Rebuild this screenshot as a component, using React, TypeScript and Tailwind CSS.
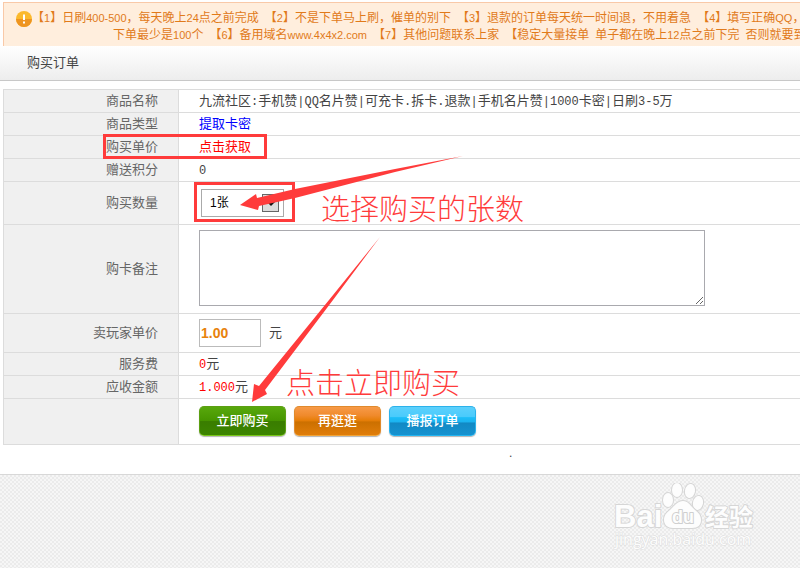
import type { ReactNode } from "react";
import clsx from "clsx";

interface FieldRowProps {
  label?: string;
  htmlFor?: string;
  height: string;
  children: ReactNode;
}

function FieldRow({ label, htmlFor, height, children }: FieldRowProps) {
  return (
    <tr className={height}>
      <th
        scope="row"
        className="w-[175px] border-r border-b border-[#dcdcdc] bg-[#f0f0f0] p-0 pr-5 text-right font-normal text-[#666]"
      >
        {htmlFor ? <label htmlFor={htmlFor}>{label}</label> : label}
      </th>
      <td className="border-b border-[#dcdcdc] p-0 pl-5 whitespace-nowrap">
        {children}
      </td>
    </tr>
  );
}

// Latin text and digits, set narrower than the Chinese around them
function Num({ children }: { children: ReactNode }) {
  return <span className="font-['Liberation_Mono',monospace] text-xs">{children}</span>;
}

function En({ children }: { children: ReactNode }) {
  return <span className="text-[11px]">{children}</span>;
}

function WarnIcon() {
  return (
    <svg viewBox="0 0 16 16" className="mt-px h-4 w-4 shrink-0" aria-hidden="true">
      <circle cx="8" cy="8" r="8" fill="#fbb92d" />
      <path d="M0 8a8 8 0 0 0 16 0z" fill="#ee9420" />
      <path d="M7 3.5h2v5.5H7zM7 10.5h2v2H7z" fill="#fff" />
    </svg>
  );
}

function Notice() {
  return (
    <div className="mt-[2px] ml-[3px] flex overflow-hidden border-t border-l border-[#f9c9a8] bg-[#ffeedd] pt-[7px] pb-[2px] pl-3 text-xs leading-[17px] whitespace-nowrap text-[#e17a1a]">
      <WarnIcon />
      <div>
        <p className="flex gap-[6px]">
          <span>【<En>1</En>】日刷<En>400-500</En>，每天晚上<En>24</En>点之前完成</span>
          <span>【<En>2</En>】不是下单马上刷，催单的别下</span>
          <span>【<En>3</En>】退款的订单每天统一时间退，不用着急</span>
          <span>【<En>4</En>】填写正确<En>QQ</En>，</span>
        </p>
        <p className="flex gap-[6px] pl-[81px]">
          <span>下单最少是<En>100</En>个</span>
          <span>【<En>6</En>】备用域名<En>www.4x4x2.com</En></span>
          <span>【<En>7</En>】其他问题联系上家</span>
          <span>【稳定大量接单</span>
          <span>单子都在晚上<En>12</En>点之前下完</span>
          <span>否则就要到</span>
        </p>
      </div>
    </div>
  );
}

const ACTIONS = [
  {
    text: "立即购买",
    style:
      "border-[#5c9f12] border-b-[#7ac81a] bg-[linear-gradient(#58a80c_0%,#479600_48%,#397d00_52%,#3d8500_100%)]",
  },
  {
    text: "再逛逛",
    style:
      "border-[#e08a2c] border-b-[#f2a436] bg-[linear-gradient(#f79a48_0%,#f08a2c_30%,#e67e08_48%,#cc7000_54%,#e07d0a_100%)]",
  },
  {
    text: "播报订单",
    style:
      "border-[#2cb2ea] border-b-[#22b4f0] bg-[linear-gradient(#5cd0fc_0%,#4acbfc_34%,#1cbdf8_38%,#1cb4f0_52%,#1289c4_58%,#1592d0_100%)]",
  },
];

function PawLogo() {
  return (
    <svg
      viewBox="0 0 146 70"
      className="h-[70px] w-[146px]"
      stroke="#d6d6d6"
      fill="#fdfdfd"
      strokeWidth="2"
      strokeLinejoin="round"
      role="img"
      aria-label="Baidu 经验"
    >
      <g style={{ paintOrder: "stroke" }} className="font-['Liberation_Sans','Noto_Sans_CJK_SC',sans-serif]">
        <text x="3" y="44" fontSize="31" fontWeight="700">Bai</text>
        <ellipse cx="57" cy="17" rx="5" ry="7" />
        <ellipse cx="66" cy="7" rx="5" ry="7" />
        <ellipse cx="79" cy="8" rx="5" ry="7" transform="rotate(10 79 8)" />
        <ellipse cx="87" cy="20" rx="5" ry="7" transform="rotate(10 87 20)" />
        <path d="M72 18c-5 0-8 4-11 7-4 4-8 6-8 12 0 5 4 8 9 8h19c6 0 9-3 9-8 0-6-4-8-8-12-3-3-5-7-10-7z" />
        <text x="61" y="40" fontSize="18" fontWeight="700" stroke="#cfcfcf">du</text>
        <text x="94" y="43" fontSize="24" fontWeight="700">经验</text>
        <text x="4" y="62" fontSize="16" strokeWidth="1" stroke="#dcdcdc" className="font-['Open_Sans',sans-serif]">
          jingyan.baidu.com
        </text>
      </g>
    </svg>
  );
}

// Red tutorial marks laid over the form
function Marks() {
  return (
    <div className="pointer-events-none absolute inset-0 overflow-hidden font-light text-[#ff3b3b]">
      <div className="absolute top-[134px] left-[103px] h-[25px] w-[164px] border-3 border-current" />
      <div className="absolute top-[182px] left-[194px] h-[40px] w-[101px] border-3 border-current" />
      <svg width="800" height="480" className="absolute top-0 left-0" fill="currentColor" aria-hidden="true">
        <path d="M240 205 256 194 257 198 295 189 395 169 463 156 395 172 295 198 259 206 258 210z" />
        <path d="M252 402 254 384 259 386 329 300 380 237 333 300 265 390 267 394z" />
      </svg>
      <p className="absolute top-[190px] left-[321px] text-[29px] leading-10 whitespace-nowrap">选择购买的张数</p>
      <p className="absolute top-[364px] left-[286px] text-[29px] leading-10 whitespace-nowrap">点击立即购买</p>
    </div>
  );
}

export default function App() {
  return (
    <div className="relative flex min-h-screen flex-col overflow-hidden bg-white font-['Liberation_Sans','Noto_Sans_CJK_SC',sans-serif] text-[13px] leading-5 text-[#444]">
      <Notice />
      <h1 className="border-b border-[#c8c8c8] bg-linear-to-b from-white to-[#ededed] py-[7px] pl-[27px] leading-5">
        购买订单
      </h1>

      <form className="mt-[8px] pl-[3px]" onSubmit={(e) => e.preventDefault()}>
        <table className="w-full border-separate border-spacing-0 border-t border-l border-[#dcdcdc]">
          <tbody>
            <FieldRow label="商品名称" height="h-[23px]">
              九流社区<Num>:</Num>手机赞<Num>|QQ</Num>名片赞<Num>|</Num>可充卡<Num>.</Num>拆卡<Num>.</Num>退款<Num>|</Num>
              手机名片赞<Num>|1000</Num>卡密<Num>|</Num>日刷<Num>3-5</Num>万
            </FieldRow>
            <FieldRow label="商品类型" height="h-[23px]">
              <span className="text-[#0000ff]">提取卡密</span>
            </FieldRow>
            <FieldRow label="购买单价" height="h-[23px]">
              <a href="#price" className="text-[#ff0000]">点击获取</a>
            </FieldRow>
            <FieldRow label="赠送积分" height="h-[23px]">
              <Num>0</Num>
            </FieldRow>
            <FieldRow label="购买数量" htmlFor="count" height="h-[43px]">
              <div className="relative ml-[2px] h-7 w-[83px] border border-[#aaa]">
                <select
                  id="count"
                  className="h-full w-full appearance-none bg-transparent pl-2 text-xs text-black"
                >
                  <option>1张</option>
                </select>
                <span className="pointer-events-none absolute top-1 right-1 flex h-[18px] w-[17px] items-center justify-center border border-[#666] bg-[#dcdcdc]">
                  <svg viewBox="0 0 8 6" className="h-[6px] w-2" aria-hidden="true">
                    <path d="M0 1h2l2 2 2-2h2v1L4 6 0 2z" fill="#111" />
                  </svg>
                </span>
              </div>
            </FieldRow>
            <FieldRow label="购卡备注" htmlFor="remark" height="h-[89px]">
              <textarea id="remark" className="mb-[2px] block h-[76px] w-[506px] border border-[#a9a9ae]" />
            </FieldRow>
            <FieldRow label="卖玩家单价" htmlFor="price" height="h-[39px]">
              <div className="flex items-center gap-2">
                <input
                  id="price"
                  defaultValue="1.00"
                  className="h-7 w-[62px] border border-[#bbb] pl-px text-sm font-bold text-[#e8820c]"
                />
                元
              </div>
            </FieldRow>
            <FieldRow label="服务费" height="h-[23px]">
              <span className="text-[#ff0000]"><Num>0</Num></span>元
            </FieldRow>
            <FieldRow label="应收金额" height="h-[23px]">
              <span className="text-[#ff0000]"><Num>1.000</Num></span>元
            </FieldRow>
            <FieldRow height="h-[46px]">
              <div className="mb-[2px] flex gap-2">
                {ACTIONS.map((action) => (
                  <button
                    key={action.text}
                    type="button"
                    className={clsx(
                      "h-[30px] w-[87px] rounded-[5px] border font-medium text-white shadow-[0_1px_1px_rgba(0,0,0,0.3)]",
                      action.style
                    )}
                  >
                    {action.text}
                  </button>
                ))}
              </div>
            </FieldRow>
          </tbody>
        </table>
        <p className="h-[29px] pl-[506px] text-xs leading-4">.</p>
      </form>

      <footer className="flex flex-1 items-start justify-end border-t border-[#d8d8d8] bg-[repeating-conic-gradient(#ebebeb_0_25%,#f6f6f6_0_50%)] bg-size-[4px_4px] pt-2 pr-[43px]">
        <PawLogo />
      </footer>
      <Marks />
    </div>
  );
}
